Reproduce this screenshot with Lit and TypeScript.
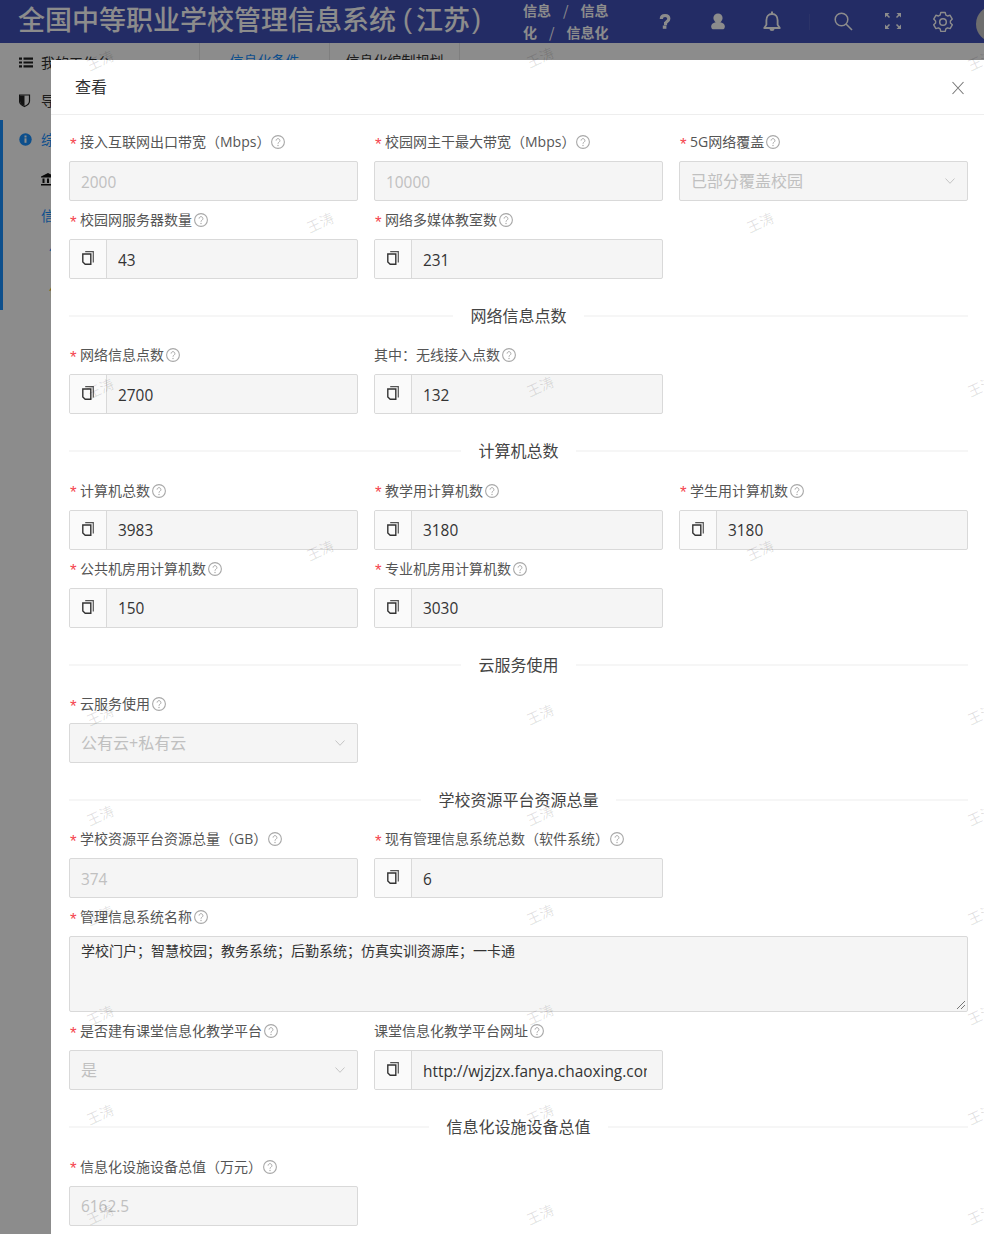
import { LitElement, html, css } from "lit";
import { customElement } from "lit/decorators.js";

type F = { l: string; v?: string; req?: boolean; kind: "dis" | "sel" | "add" | "area"; gap?: boolean; span?: boolean };
type Sec = { title?: string; rows: F[] };

const q = html`<svg class="help" viewBox="0 0 14 14"><circle cx="7" cy="7" r="6.400" fill="none" stroke="#a8a8a8" stroke-width="1.100"/><path d="M5.100 5.600a1.900 1.900 0 1 1 3 1.500c-.7.5-1.100.8-1.100 1.600" fill="none" stroke="#a8a8a8" stroke-width="1"/><circle cx="7" cy="10.500" r=".7" fill="#a8a8a8"/></svg>`;
const copy = html`<svg class="copy" viewBox="0 0 12 14"><path d="M3.200.7h8.100v10.800" fill="none" stroke="#555" stroke-width="1.200"/><path d="M.8 3h8v10.300H3.200L.8 11z" fill="#fafafa" stroke="#333" stroke-width="1.400"/></svg>`;
const chev = html`<svg class="chev" viewBox="0 0 10 6"><path d="M.5.5L5 5.300 9.500.5" fill="none" stroke="#c4c4c4" stroke-width="1"/></svg>`;

const sections: Sec[] = [
  { rows: [
    { l: "接入互联网出口带宽（Mbps）", v: "2000", req: true, kind: "dis", gap: true },
    { l: "校园网主干最大带宽（Mbps）", v: "10000", req: true, kind: "dis", gap: true },
    { l: "5G网络覆盖", v: "已部分覆盖校园", req: true, kind: "sel" },
    { l: "校园网服务器数量", v: "43", req: true, kind: "add" },
    { l: "网络多媒体教室数", v: "231", req: true, kind: "add" },
  ]},
  { title: "网络信息点数", rows: [
    { l: "网络信息点数", v: "2700", req: true, kind: "add" },
    { l: "其中：无线接入点数", v: "132", kind: "add" },
  ]},
  { title: "计算机总数", rows: [
    { l: "计算机总数", v: "3983", req: true, kind: "add" },
    { l: "教学用计算机数", v: "3180", req: true, kind: "add" },
    { l: "学生用计算机数", v: "3180", req: true, kind: "add" },
    { l: "公共机房用计算机数", v: "150", req: true, kind: "add" },
    { l: "专业机房用计算机数", v: "3030", req: true, kind: "add" },
  ]},
  { title: "云服务使用", rows: [
    { l: "云服务使用", v: "公有云+私有云", req: true, kind: "sel" },
  ]},
  { title: "学校资源平台资源总量", rows: [
    { l: "学校资源平台资源总量（GB）", v: "374", req: true, kind: "dis", gap: true },
    { l: "现有管理信息系统总数（软件系统）", v: "6", req: true, kind: "add", gap: true },
    { l: "管理信息系统名称", v: "学校门户；智慧校园；教务系统；后勤系统；仿真实训资源库；一卡通", req: true, kind: "area", span: true },
    { l: "是否建有课堂信息化教学平台", v: "是", req: true, kind: "sel" },
    { l: "课堂信息化教学平台网址", v: "http://wjzjzx.fanya.chaoxing.com", kind: "add" },
  ]},
  { title: "信息化设施设备总值", rows: [
    { l: "信息化设施设备总值（万元）", v: "6162.5", req: true, kind: "dis", gap: true },
  ]},
];

const marks: [number, number][] = [
  [100,60],[540,57],[981,60],
  [320,222],[760,222],
  [100,388],[540,386],[981,386],
  [320,550],[760,550],
  [100,715],[540,714],[981,714],
  [100,815],[540,815],[981,815],
  [100,915],[540,914],[981,914],
  [100,1015],[540,1014],[981,1014],
  [100,1114],[540,1114],[981,1114],
  [100,1214],[540,1214],[981,1214],
];

@customElement("app-root")
export class AppRoot extends LitElement {
  static styles = css`
    :host { display: block; position: relative; width: 984px; height: 1234px; overflow: hidden; background: #fff;
      font-family: "Open Sans", "Noto Sans CJK SC", sans-serif; color: #333; }
    .topbar { height: 43px; background: #4150b9; color: #fff; display: flex; align-items: center; white-space: nowrap; }
    .title { font-size: 27px; line-height: 40px; padding: 0 0 5px 18px; width: 481px; font-weight: 500; font-family: "Noto Sans CJK SC", sans-serif; display: flex; }
    .title .p { font-family: "Liberation Sans", sans-serif; font-weight: 400; }
    .title .po { margin: 0 4px 0 7px; }
    .title .pc { margin-left: 2px; }
    .crumbs { width: 126px; margin: 0 0 2px 24px; font-size: 14px; font-weight: 700; line-height: 22px; font-family: "Noto Sans CJK SC", sans-serif; }
    .crumbs div { display: flex; }
    .crumbs span.sl { margin: 0 12px; font-weight: 400; }
    .tool { position: absolute; top: 10px; width: 22px; height: 22px; }
    .avatar { position: absolute; left: 976px; top: 6px; width: 36px; height: 36px; border-radius: 50%; background: #c8c8c8; }
    .side { position: absolute; left: 0; top: 43px; width: 200px; height: 267px; border-right: 1px solid #e8e8e8; box-sizing: border-box; }
    .nav { position: absolute; display: flex; align-items: center; gap: 8px; font-size: 14px; color: #333; white-space: nowrap; }
    .blue { color: #1890ff; }
    .nav svg { width: 14px; height: 15px; flex: none; }
    .rail { position: absolute; left: 0; top: 120px; width: 3px; height: 190px; background: #1890ff; }
    .tabs { position: absolute; left: 200px; top: 43px; display: flex; height: 40px; font-size: 14px; }
    .tab { width: 129px; border-right: 1px solid #e8e8e8; text-align: center; line-height: 36px; }
    .mask { position: absolute; inset: 0; background: rgba(0, 0, 0, .45); }
    .modal { position: absolute; left: 51px; top: 60px; width: 960px; height: 1300px; background: #fff; }
    .mhead { height: 52px; padding: 0 0 2px 24px; border-bottom: 1px solid #eee; display: flex; align-items: center; font-size: 16px; color: #333; font-family: "Noto Sans CJK SC", sans-serif; }
    .close { position: absolute; left: 901px; top: 21px; width: 12px; height: 14px; }
    .body { width: 899px; padding: 8px 0 0 18px; }
    .grid { display: grid; grid-template-columns: repeat(3, 289px); column-gap: 16px; }
    .field.span { grid-column: 1 / -1; }
    .label { height: 38px; display: flex; align-items: center; font-size: 14px; line-height: 20px; color: #555; white-space: nowrap; }
    .star { color: #f5454f; width: 11px; padding-left: 1px; box-sizing: border-box; padding-top: 5px; font-family: "Liberation Sans", sans-serif; font-size: 17px; line-height: 20px; flex: none; }
    .help { width: 14px; height: 14px; margin-left: 2px; flex: none; }
    .label.gap .help { margin-left: 1px; }
    .box { height: 40px; box-sizing: border-box; border: 1px solid #d9d9d9; border-radius: 2px; background: #f5f5f5; display: flex; align-items: center; font-size: 15.4px; overflow: hidden; }
    .val { margin: 0 15px 0 11px; flex: 1; white-space: nowrap; overflow: hidden; min-width: 0; color: #c0c0c0; }
    .add .val { color: #333; padding-top: 2px; }
    .dis .val { padding-top: 2px; }
    .sel .val { padding-bottom: 2px; font-size: 16px; margin-right: 11px; }
    .addon { width: 36px; height: 100%; background: #fafafa; border-right: 1px solid #d9d9d9; display: flex; align-items: center; justify-content: center; flex: none; }
    .copy { width: 12px; height: 14px; margin-top: -2px; }
    .chev { width: 10px; height: 6px; margin-right: 12px; flex: none; }
    .area { height: 76px; align-items: flex-start; position: relative; font-size: 14px; font-family: "Noto Sans CJK SC", sans-serif; }
    .area .val { color: #333; padding-top: 2px; line-height: 22px; }
    .grip { position: absolute; right: 1px; bottom: 1px; width: 10px; height: 10px; }
    .div { height: 25.36px; margin: 24.3px 0 7.7px; display: flex; align-items: center; font-size: 16px; color: #444; font-family: "Noto Sans CJK SC", sans-serif; white-space: nowrap; }
    .div::before, .div::after { content: ""; flex: 1; height: 2px; background: #f6f6f6; }
    .div span { padding: 0 17.500px 2px; }
    .wm { position: absolute; width: 40px; margin-left: -20px; margin-top: -10px; text-align: center; font-size: 14px; line-height: 20px; color: rgba(0,0,0,.12); transform: rotate(-25deg); pointer-events: none; white-space: nowrap; font-family: "Noto Sans CJK SC", sans-serif; }
    .vr { position: absolute; left: 809px; top: 14px; width: 1px; height: 16px; background: rgba(255,255,255,.08); }
  `;

  private field(f: F) {
    return html`<div class="field ${f.span ? "span" : ""}">
      <div class="label ${f.gap ? "gap" : ""}">${f.req ? html`<span class="star">*</span>` : ""}<span>${f.l}</span>${q}</div>
      ${f.kind === "area"
        ? html`<div class="box area"><div class="val">${f.v}</div><svg class="grip" viewBox="0 0 10 10"><path d="M1 9L9 1M5 9l4-4" stroke="#777" stroke-width="1" fill="none"/></svg></div>`
        : html`<div class="box ${f.kind}">
            ${f.kind === "add" ? html`<div class="addon">${copy}</div>` : ""}
            <div class="val">${f.v}</div>
            ${f.kind === "sel" ? chev : ""}
          </div>`}
    </div>`;
  }

  render() {
    return html`
      <div class="topbar">
        <div class="title"><span>全国中等职业学校管理信息系统</span><span class="p po">(</span><span>江苏</span><span class="p pc">)</span></div>
        <div class="crumbs">
          <div>信息<span class="sl">/</span>信息</div>
          <div>化<span class="sl">/</span>信息化</div>
        </div>
      </div>
      <svg class="tool" style="left:654px" viewBox="0 0 22 22"><path d="M7.300 9c0-2.300 1.500-3.500 3.800-3.500s3.700 1.200 3.700 3.200c0 2.800-3.300 2.700-3.300 5h-1.500" fill="none" stroke="#fff" stroke-width="3.200"/><rect x="8.800" y="15.500" width="3.600" height="3.300" fill="#fff"/></svg>
      <svg class="tool" style="left:707px" viewBox="0 0 22 22"><circle cx="11" cy="8" r="4.600" fill="#fff"/><path d="M4.200 16.500c0-3 3-4.500 6.800-4.500s6.800 1.500 6.800 4.500c0 2-1 2.800-2.500 2.800H6.700c-1.500 0-2.500-.8-2.500-2.800z" fill="#fff"/></svg>
      <svg class="tool" style="left:761px" viewBox="0 0 22 22"><path d="M11 4c-3.700 0-5.600 2.800-5.600 6.200v4.600L3.200 18h15.600l-2.200-3.200v-4.600C16.600 6.800 14.700 4 11 4z" fill="none" stroke="#fff" stroke-width="1.800" stroke-linejoin="round"/><path d="M10 1.500h2V4h-2zM8.500 19h5a2.500 2 0 0 1-5 0z" fill="#fff"/></svg>
      <div class="vr"></div>
      <svg class="tool" style="left:832px" viewBox="0 0 22 22"><circle cx="9.500" cy="9.500" r="6.300" fill="none" stroke="#fff" stroke-width="1.500"/><path d="M14 14l6 6" stroke="#fff" stroke-width="1.600"/></svg>
      <svg class="tool" style="left:882px" viewBox="0 0 22 22"><path d="M4 4l3.500 3.500M18 4l-3.500 3.500M4 18l3.500-3.500M18 18l-3.500-3.500" stroke="#fff" stroke-width="1.500"/><path d="M3 3h4.500L3 7.500zM19 3v4.500L14.500 3zM3 19v-4.500L7.500 19zM19 19h-4.500l4.500-4.500z" fill="#fff"/></svg>
      <svg class="tool" style="left:932px;top:11px" viewBox="0 0 22 22"><path d="M8.800 1.500h4.400l.7 2.600 1.600.9 2.600-.7 2.200 3.800-1.900 1.900v1.900l1.900 1.900-2.200 3.800-2.600-.7-1.600.9-.7 2.600H8.800l-.7-2.600-1.600-.9-2.600.7-2.200-3.800 1.900-1.900V10L1.700 8.100l2.200-3.800 2.600.7 1.600-.9z" fill="none" stroke="#fff" stroke-width="1.400" stroke-linejoin="round"/><circle cx="11" cy="11" r="3.300" fill="none" stroke="#fff" stroke-width="1.500"/></svg>
      <div class="avatar"></div>

      <div class="side"></div>
      <div class="rail"></div>
      <div class="nav" style="left:19px;top:52px"><svg viewBox="0 0 14 15"><path d="M0 2.500h3v2.200H0zM4.500 2.500H14v2.200H4.500zM0 6.400h3v2.200H0zM4.500 6.400H14v2.200H4.500zM0 10.300h3v2.200H0zM4.500 10.300H14v2.200H4.500z" fill="#222"/></svg><span>我的工作台</span></div>
      <div class="nav" style="left:19px;top:90px"><svg viewBox="0 0 14 15"><path d="M.5 2h10v6c0 2.800-2.500 4.500-5 5.500-2.500-1-5-2.700-5-5.500z" fill="none" stroke="#222" stroke-width="1.200"/><path d="M1 2.500h4.500v10.500C3 12 1 10.500 1 8z" fill="#222"/></svg><span>导航</span></div>
      <div class="nav blue" style="left:19px;top:129px"><svg viewBox="0 0 14 15"><circle cx="6.500" cy="7.500" r="6.200" fill="#1890ff"/><rect x="5.500" y="6.300" width="2" height="4.500" fill="#fff"/><rect x="5.500" y="3.500" width="2" height="2" fill="#fff"/></svg><span>综合</span></div>
      <div class="nav" style="left:41px;top:168px"><svg viewBox="0 0 14 15"><path d="M7 2l7 3.500v1H0v-1zM1.500 7.500h2v4.500h-2zM6 7.500h2v4.500H6zM10.500 7.500h2v4.500h-2zM0 13h14v1.500H0z" fill="#111"/></svg><span>学校</span></div>
      <div class="nav blue" style="left:41px;top:205px"><span>信息</span></div>
      <div class="nav blue" style="left:49px;top:240px"><span>信息</span></div>
      <div class="nav" style="left:49px;top:280px;color:#e6b422"><span>信息</span></div>
      <div class="tabs">
        <div class="tab blue">信息化条件</div>
        <div class="tab">信息化编制规划</div>
      </div>

      <div class="mask"></div>
      <div class="modal">
        <div class="mhead">查看</div>
        <svg class="close" viewBox="0 0 12 14"><path d="M.5 1l11 12M11.500 1L.5 13" stroke="#777" stroke-width="1.100" fill="none"/></svg>
        <div class="body">
          ${sections.map(s => html`
            ${s.title ? html`<div class="div"><span>${s.title}</span></div>` : ""}
            <div class="grid">${s.rows.map(f => this.field(f))}</div>
          `)}
        </div>
      </div>
      ${marks.map(([x, y]) => html`<div class="wm" style="left:${x}px;top:${y}px">王涛</div>`)}
    `;
  }
}
